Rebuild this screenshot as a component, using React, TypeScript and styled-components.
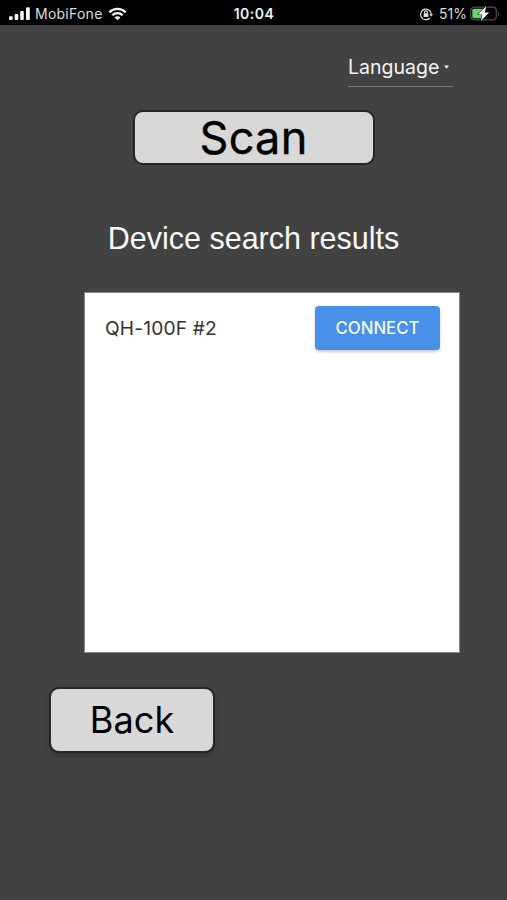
import React from "react";
import styled, { createGlobalStyle } from "styled-components";

const GlobalStyle = createGlobalStyle`
  * { box-sizing: border-box; }
  body { margin: 0; background: #424242; font-family: Inter, "Liberation Sans", sans-serif; }
  button { font-family: inherit; padding: 0; margin: 0; cursor: pointer; }
`;

const Screen = styled.div`
  width: 507px;
  height: 900px;
  background: #424242;
  display: flex;
  flex-direction: column;
  overflow: hidden;
`;

const StatusBar = styled.header`
  flex: none;
  height: 25px;
  background: #000;
  color: #dcdcdc;
  display: grid;
  grid-template-columns: 1fr auto 1fr;
  align-items: center;
  padding: 2px 7px 0 8px;
  font-size: 14px;
  line-height: 20px;
`;

const StatusGroup = styled.div<{ $end?: boolean }>`
  display: flex;
  align-items: center;
  justify-content: ${(p) => (p.$end ? "flex-end" : "flex-start")};
  svg { display: block; flex: none; }
`;

const Carrier = styled.span`
  margin: 0 5px 0 5px;
  letter-spacing: 0.25px;
`;

const Clock = styled.time`
  color: #f2f2f2;
  font-weight: 600;
  letter-spacing: 0.5px;
`;

const Percent = styled.span`
  margin: 0 3px 0 6px;
`;

const Content = styled.main`
  flex: 1;
  display: flex;
  flex-direction: column;
`;

const LanguageSelect = styled.button`
  align-self: flex-end;
  display: flex;
  align-items: center;
  width: 105px;
  height: 38px;
  margin: 24px 54px 0 0;
  padding-bottom: 2px;
  border: 0;
  border-bottom: 1px solid #777;
  background: none;
  color: #f4f4f4;
  font-size: 19.5px;
  svg { margin-left: 5px; }
`;

const PlateButton = styled.button`
  border: 2px solid #262626;
  border-radius: 10px;
  background: #d8d8d8;
  color: #000;
  display: flex;
  align-items: center;
  justify-content: center;
`;

const ScanButton = styled(PlateButton)`
  align-self: center;
  width: 242px;
  height: 55px;
  margin-top: 23px;
  font-size: 45px;
  letter-spacing: 0.3px;
  -webkit-text-stroke: 0.4px #000;
`;

const BackButton = styled(PlateButton)`
  width: 166px;
  height: 66px;
  margin: 34px 0 0 49px;
  font-size: 36.2px;
  box-shadow: 0 3px 5px rgba(0, 0, 0, 0.25);
`;

const Heading = styled.h1`
  margin: 53px 0 0;
  height: 40px;
  text-align: center;
  color: #f8f8f8;
  font: 400 30.5px/40px "Liberation Sans", Arial, sans-serif;
`;

const DeviceList = styled.ul`
  list-style: none;
  width: 376px;
  height: 361px;
  margin: 34px 0 0 84px;
  padding: 13px 19px 0 20px;
  background: #fff;
  border: 1px solid #858585;
`;

const DeviceRow = styled.li`
  display: flex;
  align-items: center;
  justify-content: space-between;
`;

const DeviceName = styled.span`
  color: #333;
  font-size: 19.2px;
  letter-spacing: 0.16px;
`;

const ConnectButton = styled.button`
  width: 125px;
  height: 44px;
  border: 0;
  border-radius: 4px;
  background: #4890e8;
  color: #f6faff;
  font-size: 16.8px;
  font-weight: 500;
  box-shadow: 0 2px 3px rgba(0, 0, 0, 0.2);
`;

const SignalIcon = () => (
  <svg width="22" height="14" viewBox="0 0 22 14" fill="#f4f4f4">
    <rect x="1" y="9.3" width="3.6" height="3.7" rx="1" />
    <rect x="6.7" y="7" width="3.6" height="6" rx="1" />
    <rect x="12.2" y="4" width="3.6" height="9" rx="1" />
    <rect x="18" y="0.3" width="3.8" height="12.7" rx="1" />
  </svg>
);

const WifiIcon = () => (
  <svg width="19" height="14" viewBox="0 0 20 14" fill="none" stroke="#f4f4f4" strokeWidth="2.5">
    <path d="M1.4 5.2C6.2 0.4 13.8 0.4 18.6 5.2" />
    <path d="M4.6 8.3C7.6 5.3 12.4 5.3 15.4 8.3" />
    <path d="M10 13.6L6.9 10.6C8.6 9 11.4 9 13.1 10.6Z" fill="#f4f4f4" stroke="none" />
  </svg>
);

const RotationLockIcon = () => (
  <svg width="14" height="14" viewBox="0 0 14 14" fill="none" stroke="#e0e0e0" strokeWidth="1.2">
    <path d="M10.8 11A5.3 5.3 0 1 1 12.2 8" />
    <path d="M10.4 7.3H14L12.1 9.8Z" fill="#e0e0e0" stroke="none" />
    <rect x="4.6" y="6.2" width="4.8" height="3.8" rx="0.5" fill="#e0e0e0" stroke="none" />
    <path d="M5.6 6.5V5.2a1.4 1.4 0 0 1 2.8 0V6.5" />
  </svg>
);

const BatteryIcon = () => (
  <svg width="30" height="16" viewBox="0 0 30 16">
    <rect x="0.7" y="1.2" width="25.6" height="12.6" rx="3.5" fill="none" stroke="#505050" strokeWidth="1.2" />
    <path d="M28 5Q30 7.5 28 10Z" fill="#505050" />
    <rect x="2.3" y="2.8" width="11.7" height="9.4" rx="1.5" fill="#63d56b" />
    <path d="M16.2 0.2L8 8.4H12.4L10.8 14.9L19.2 6.4H14.8Z" fill="#fff" stroke="#000" strokeWidth="1" paintOrder="stroke" />
  </svg>
);

const CaretIcon = () => (
  <svg width="5" height="4" viewBox="0 0 5 4" fill="#f4f4f4">
    <path d="M0 0.5H5L2.5 3.7Z" />
  </svg>
);

const devices = ["QH-100F #2"];

export default function App() {
  return (
    <Screen>
      <GlobalStyle />
      <StatusBar>
        <StatusGroup>
          <SignalIcon />
          <Carrier>MobiFone</Carrier>
          <WifiIcon />
        </StatusGroup>
        <Clock>10:04</Clock>
        <StatusGroup $end>
          <RotationLockIcon />
          <Percent>51%</Percent>
          <BatteryIcon />
        </StatusGroup>
      </StatusBar>
      <Content>
        <LanguageSelect>
          Language
          <CaretIcon />
        </LanguageSelect>
        <ScanButton>Scan</ScanButton>
        <Heading>Device search results</Heading>
        <DeviceList>
          {devices.map((name) => (
            <DeviceRow key={name}>
              <DeviceName>{name}</DeviceName>
              <ConnectButton>CONNECT</ConnectButton>
            </DeviceRow>
          ))}
        </DeviceList>
        <BackButton>Back</BackButton>
      </Content>
    </Screen>
  );
}
